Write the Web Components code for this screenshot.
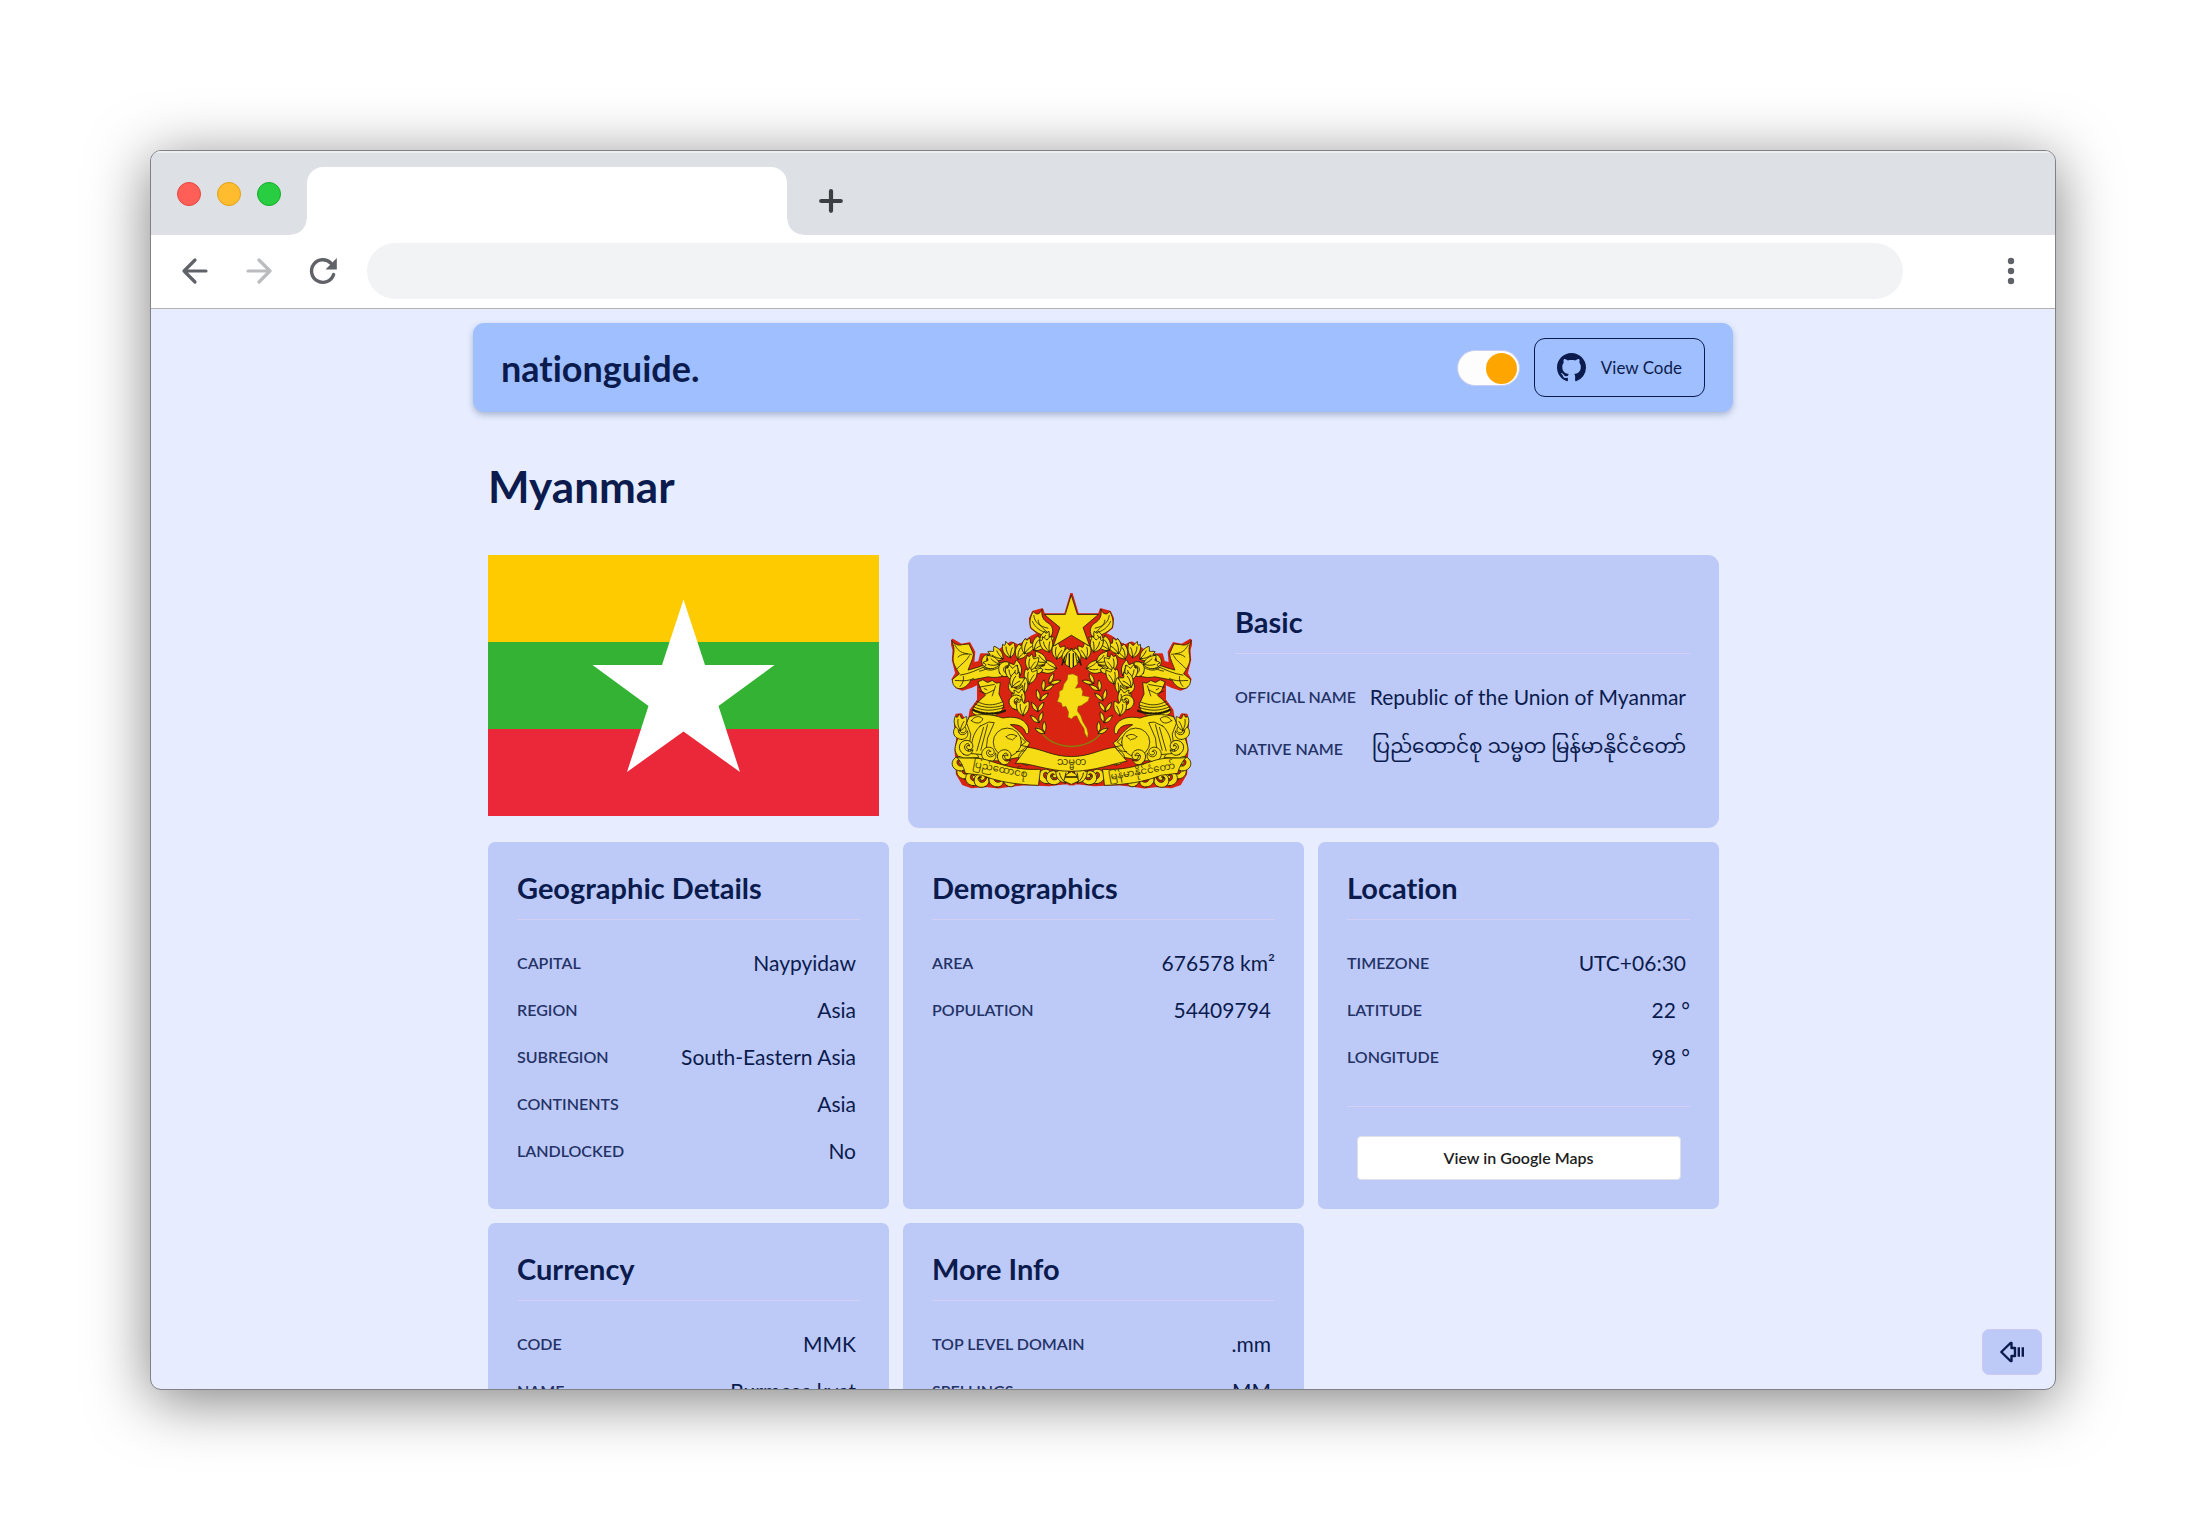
<!DOCTYPE html>
<html lang="en">
<head>
<meta charset="utf-8">
<title>nationguide.</title>
<style>
  :root {
    --ink: #0b1b4d;
    --label: #243266;
    --page: #e7edff;
    --card: #bdcaf8;
    --bar: #a0bfff;
    --rule: #d2d0f5;
  }
  body {
    margin: 0;
    padding: 150px;
    height: 100vh;
    box-sizing: border-box;
    overflow: hidden;
    background: #fff;
    color: var(--ink);
    font-family: Lato, "Noto Sans", "Noto Sans Myanmar", sans-serif;
    font-variant-ligatures: none;
  }
</style>
</head>
<body>

<browser-window>
  <country-page></country-page>
</browser-window>

<template id="browser-window">
  <style>
    :host {
      display: flex; flex-direction: column; height: 100%; box-sizing: border-box; position: relative;
      border: 1px solid #808184; border-radius: 11px; overflow: hidden; background: var(--page);
      box-shadow: 0 10px 60px rgba(0,0,0,.5);
    }
    button { border: 0; padding: 0; background: none; display: block; }
    svg { display: block; }
    .tabs { flex: none; height: 84px; background: #dde0e5; display: flex; align-items: flex-end; box-shadow: inset 0 2px #eceef0; }
    .lights { display: flex; gap: 16px; padding: 2px 10px 0 26px; align-self: center; }
    .lights button { width: 24px; height: 24px; border-radius: 50%; box-sizing: border-box; border: 1px solid var(--edge); }
    .red { background: #ff5f57; --edge: #e2463f; }
    .yellow { background: #febc2e; --edge: #e1a116; }
    .green { background: #28cd41; --edge: #14ae2b; }
    .flare { width: 16px; height: 16px; }
    .flare.l { background: radial-gradient(circle at 0 0, #dde0e5 15px, #fff 16px); }
    .flare.r { background: radial-gradient(circle at 100% 0, #dde0e5 15px, #fff 16px); }
    .tab { width: 480px; height: 68px; background: #fff; border-radius: 16px 16px 0 0; }
    .plus { margin: 0 0 21px 15px; }
    .tools { flex: none; height: 71px; padding: 0 0 2px 28px; background: #fff; border-bottom: 1px solid #b4b0b5; display: flex; align-items: center; }
    .tools button { margin-right: 32px; }
    .tools input { flex: 1; min-width: 0; height: 56px; border: 0; border-radius: 28px; background: #f1f3f5; padding: 0 28px; box-sizing: border-box; font: 20px Lato, sans-serif; margin-left: -4px; }
    .tools .more { margin: 0 28px 0 92px; }
    .view { flex: 1; min-height: 0; overflow: hidden; }
  </style>
  <div class="tabs">
    <div class="lights">
      <button class="red" aria-label="Close"></button>
      <button class="yellow" aria-label="Minimize"></button>
      <button class="green" aria-label="Maximize"></button>
    </div>
    <div class="flare l"></div><div class="tab"></div><div class="flare r"></div>
    <button class="plus" aria-label="New tab"><svg width="26" height="26" viewBox="0 0 26 26" stroke="#3c4043" stroke-width="4.200" stroke-linecap="round"><path d="M13 3.200v19.600M3.200 13h19.600"/></svg></button>
  </div>
  <div class="tools">
    <button aria-label="Back"><svg width="32" height="32" viewBox="0 0 32 32" fill="none" stroke="#5f6368" stroke-width="3.200" stroke-linecap="round" stroke-linejoin="round"><path d="M27 16H5M16 5 5 16l11 11"/></svg></button>
    <button aria-label="Forward"><svg width="32" height="32" viewBox="0 0 32 32" fill="none" stroke="#babcbe" stroke-width="3.200" stroke-linecap="round" stroke-linejoin="round"><path d="M5 16h22M16 5l11 11-11 11"/></svg></button>
    <button aria-label="Reload"><svg width="32" height="32" viewBox="0 0 32 32"><path d="M26.600 19.500A11.300 11.300 0 1 1 24 8.200" fill="none" stroke="#5f6368" stroke-width="3.400" stroke-linecap="round"/><path d="M29.800 3v11.400H18.500z" fill="#5f6368"/></svg></button>
    <input type="text" aria-label="Address">
    <button class="more" aria-label="Menu"><svg width="32" height="32" viewBox="0 0 32 32" fill="#5f6368"><circle cx="16" cy="6" r="3.200"/><circle cx="16" cy="16" r="3.200"/><circle cx="16" cy="26" r="3.200"/></svg></button>
  </div>
  <div class="view"><slot></slot></div>
</template>

<template id="country-page">
  <style>
    :host { display: block; }
    .wrap { max-width: 1260px; margin: 0 auto; padding-top: 14px; }
    main { padding: 0 14px 0 15px; }
    h1 { margin: 0; padding: 47px 0 42px; font-size: 44px; line-height: 54px; font-weight: 700; }
    .top { display: flex; align-items: flex-start; gap: 29px; }
    .top info-card { flex: 1; }
    .cards { display: grid; grid-template-columns: repeat(3, 1fr); gap: 14px; margin-top: 14px; }
    .maps { display: block; box-sizing: border-box; width: 324px; max-width: 100%; height: 44px; margin: 29px auto 0; border: 1px solid #dfe1ea; border-radius: 4px; background: #fff; color: #1c1d22; font: 600 16px/42px Lato, sans-serif; text-align: center; text-decoration: none; }
    hr { border: 0; border-top: 1px solid var(--rule); margin: 26px 0 0; }
    .back { position: absolute; right: 13px; bottom: 14px; width: 60px; height: 46px; box-sizing: border-box; padding: 0; border: 1px solid #cbc9f3; border-radius: 7px; background: var(--card); display: grid; place-items: center; }
  </style>
  <div class="wrap">
    <site-header></site-header>
    <main>
      <h1>Myanmar</h1>
      <div class="top">
        <country-flag></country-flag>
        <info-card heading="Basic" wide>
          <state-seal slot="media"></state-seal>
          <info-row label="Official Name">Republic of the Union of Myanmar</info-row>
          <info-row label="Native Name" native>ပြည်ထောင်စု သမ္မတ မြန်မာနိုင်ငံတော်</info-row>
        </info-card>
      </div>
      <div class="cards">
        <info-card heading="Geographic Details">
          <info-row label="Capital">Naypyidaw</info-row>
          <info-row label="Region">Asia</info-row>
          <info-row label="Subregion">South-Eastern Asia</info-row>
          <info-row label="Continents">Asia</info-row>
          <info-row label="Landlocked">No</info-row>
        </info-card>
        <info-card heading="Demographics">
          <info-row label="Area" unit>676578 km²</info-row>
          <info-row label="Population">54409794</info-row>
        </info-card>
        <info-card heading="Location">
          <info-row label="Timezone">UTC+06:30</info-row>
          <info-row label="Latitude" unit>22 °</info-row>
          <info-row label="Longitude" unit>98 °</info-row>
          <hr>
          <a class="maps" href="#maps">View in Google Maps</a>
        </info-card>
        <info-card heading="Currency">
          <info-row label="Code">MMK</info-row>
          <info-row label="Name">Burmese kyat</info-row>
        </info-card>
        <info-card heading="More Info">
          <info-row label="Top Level Domain">.mm</info-row>
          <info-row label="Spellings">MM</info-row>
        </info-card>
      </div>
    </main>
  </div>
  <button class="back" aria-label="Go back"><svg width="26" height="22" viewBox="0 0 26 22" fill="none" stroke="#0b1b4d" stroke-width="2.400" stroke-linejoin="round"><path d="M11.500 2 2.300 11l9.200 9h1v-5H16V7h-3.500V2z"/><path d="M19.800 6.200v9.600M23.800 6.200v9.600"/></svg></button>
</template>

<template id="site-header">
  <style>
    :host { display: block; }
    header { display: flex; align-items: center; gap: 14px; box-sizing: border-box; min-height: 89px; padding: 0 28px; background: var(--bar); border-radius: 11px; box-shadow: 0 3px 6px rgba(60,80,130,.35); }
    .brand { margin-right: auto; color: inherit; text-decoration: none; font-weight: 700; font-size: 36px; line-height: 44px; }
    label { position: relative; display: flex; }
    input { appearance: none; margin: 0; width: 63px; height: 36px; box-sizing: border-box; border: 1px solid #c9cdee; border-radius: 18px; background: #fdfdfd; display: flex; justify-content: flex-end; padding: 2px; }
    input::before { content: ""; width: 31px; height: 31px; border-radius: 50%; background: #ffa500; }
    .code { display: flex; align-items: center; gap: 15px; box-sizing: border-box; height: 59px; padding: 0 22px; border: 1px solid var(--ink); border-radius: 11px; color: inherit; text-decoration: none; font-size: 17px; line-height: 28px; }
    svg { display: block; }
  </style>
  <header>
    <a class="brand" href="#home">nationguide.</a>
    <label><input type="checkbox" role="switch" checked aria-label="Light theme"></label>
    <a class="code" href="#code"><svg width="29" height="29" viewBox="0 0 16 16" fill="#0b1b4d"><path d="M8 0C3.580 0 0 3.580 0 8c0 3.540 2.290 6.530 5.470 7.590.4.070.55-.17.55-.38 0-.19-.01-.82-.01-1.490-2.010.37-2.530-.49-2.690-.94-.09-.23-.48-.94-.82-1.130-.28-.15-.68-.52-.01-.53.63-.01 1.080.58 1.230.82.72 1.210 1.870.87 2.330.66.07-.52.28-.87.51-1.070-1.780-.2-3.640-.89-3.640-3.950 0-.87.31-1.590.82-2.150-.08-.2-.36-1.020.08-2.120 0 0 .67-.21 2.200.82.64-.18 1.320-.27 2-.27s1.360.09 2 .27c1.530-1.040 2.200-.82 2.200-.82.44 1.100.16 1.920.08 2.120.51.56.82 1.270.82 2.150 0 3.070-1.870 3.750-3.650 3.950.29.25.54.73.54 1.480 0 1.070-.01 1.930-.01 2.200 0 .21.15.46.55.38A8.010 8.010 0 0 0 16 8c0-4.420-3.580-8-8-8z"/></svg>View Code</a>
  </header>
</template>

<template id="info-card">
  <style>
    :host { display: block; box-sizing: border-box; padding: 29px; border-radius: 7px; background: var(--card); }
    :host([wide]) { display: flex; align-items: center; gap: 43px; min-height: 273px; padding: 0 29px 0 43px; border-radius: 11px; }
    .body { flex: 1; min-width: 0; }
    h2 { margin: 0 0 19px; padding-bottom: 14px; border-bottom: 1px solid var(--rule); font-size: 29px; line-height: 34px; font-weight: 700; }
  </style>
  <slot name="media"></slot>
  <div class="body"><h2></h2><slot></slot></div>
</template>

<template id="info-row">
  <style>
    :host { display: flex; align-items: center; justify-content: space-between; height: 47px; white-space: nowrap; }
    :host([native]) { height: 58px; }
    .label { font-size: 16px; line-height: 24px; font-weight: 600; text-transform: uppercase; color: var(--label); }
    .value { font-size: 21px; line-height: 32px; padding-right: 4px; }
    :host([unit]) .value { padding-right: 0; }
    :host([native]) .value { font-size: 20px; padding-bottom: 8px; }
  </style>
  <span class="label"></span><span class="value"><slot></slot></span>
</template>

<template id="country-flag">
  <style>:host { display: block; width: 391px; } svg { display: block; width: 100%; }</style>
  <svg viewBox="0 0 391 261" role="img" aria-label="Flag of Myanmar">
    <path fill="#fecb00" d="M0 0h391v87H0z"/><path fill="#34b233" d="M0 87h391v87H0z"/><path fill="#ea2839" d="M0 174h391v87H0z"/>
    <path fill="#fff" d="M195.500 44.500 217 110h69.500l-56 41 21.500 66-56.500-40.500L139 217l21.500-66-56-41H174z"/>
  </svg>
</template>

<template id="state-seal">
  <style>:host { display: block; flex: none; width: 241px; } svg { display: block; width: 100%; }</style>
  <svg viewBox="185 159 719 589" role="img" aria-label="State Seal of Myanmar">
    <defs>
      <g id="leaf"><path d="M0 0C-16-8-22-26-14-44c4 6 8 6 10-6 8 6 6 12 10 14 6-2 8-6 14-6 2 18-2 34-20 42z"/><path d="M0-2C-6-14-8-22-6-34M1-3C4-14 6-20 12-28" fill="none"/></g>
      <g id="sprig"><path d="M0 0C-9-8-9-20-3-32 4-22 6-10 0 0z"/></g>
      <g id="curl"><path d="M0 0c-22-2-30-22-18-36 10-12 30-8 32 6 0 10-12 14-17 6-1-5 3-8 7-6-4-8-14-4-13 5 1 14 22 15 27-1 4 14-2 26-18 26z"/></g>
      <g id="half">
        <path fill="#f5dc14" d="M457 208c-4 18 2 32 20 42 14 10 14 28 6 38-22 2-44-10-60-26-6-18 0-36 8-48 6 10 18 12 26-6z"/>
        <path fill="none" d="M432 226c2 20 16 32 42 38M445 240c0 14 14 24 34 42M428 244c8 18 22 28 46 36"/>
        <path fill="#f5dc14" d="M187 301c8 12 20 16 32 12l20-2 13 30c-2 18-12 34-16 48 20-6 40-10 54-20l60-4 4 36c-18 10-40 12-58 8l-52 10c-6 14-22 28-38 25-14-5-18-18-16-28l20-16c-12-20-22-34-18-54 4-18 2-30-5-45z"/>
        <path fill="none" d="M196 314c8 12 14 24 38 26M206 350c10-10 26-10 40-8M202 386c14-16 30-24 38-40M212 404c30-4 50-16 76-26M198 420c16 0 36 4 54-6M222 408c2 10-2 22-10 30M280 380c10 12 30 12 46 2M270 392c16-2 28-10 40-26"/>
        <g fill="#f5dc14">
          <use href="#curl" transform="translate(300 385)"/><use href="#curl" transform="translate(330 398) rotate(60)"/>
          <use href="#leaf" transform="translate(340 356) rotate(-60)"/><use href="#leaf" transform="translate(362 352) rotate(-12)"/>
          <use href="#leaf" transform="translate(384 356) rotate(24)"/><use href="#leaf" transform="translate(330 372) rotate(-80)"/>
          <use href="#leaf" transform="translate(404 340) rotate(22)"/><use href="#leaf" transform="translate(432 330) rotate(35)"/>
          <use href="#leaf" transform="translate(455 318) rotate(30)"/><use href="#leaf" transform="translate(478 335) rotate(-20)"/>
          <use href="#leaf" transform="translate(500 356) rotate(8)"/><use href="#leaf" transform="translate(520 366) rotate(36)"/>
          <use href="#curl" transform="translate(470 392) rotate(-30)"/><use href="#curl" transform="translate(440 400)"/>
          <use href="#leaf" transform="translate(500 384) rotate(-84)"/><use href="#leaf" transform="translate(470 366) rotate(-70)"/>
          <use href="#leaf" transform="translate(420 390) rotate(10)"/><use href="#leaf" transform="translate(392 404) rotate(-40)"/>
          <use href="#leaf" transform="translate(372 420) rotate(-14)"/><use href="#leaf" transform="translate(418 430) rotate(6)"/>
          <use href="#leaf" transform="translate(404 458) rotate(-20)"/><use href="#curl" transform="translate(380 460)"/>
          <use href="#leaf" transform="translate(398 492) rotate(-26)"/><use href="#curl" transform="translate(374 506) rotate(20)"/>
          <use href="#leaf" transform="translate(400 525) rotate(-4)"/><use href="#leaf" transform="translate(366 440) rotate(30)"/>
          <path d="M266 424l14-6 14 8 14-6 12 8 12-2-4 34 14 30c0 26-22 38-50 38-22 2-40-6-44-14 2-16 14-24 26-38l14-12-12-14z"/>
          <path d="M240 528c30-10 66-8 100 4 30-6 60-2 74 24 6 16 2 26-6 22-4-22-26-28-46-26 16 10 34 24 46 46l12 8-24 42-66 12-90-4-26-8c4-40 8-90 26-120z"/>
          <path d="M212 526c-14 10-18 20-14 34l12 16-12 40c-4 18 6 32 20 36l50-2c-4-14-20-18-32-14l8-56-16-42c-8 4-14-2-16-12z"/>
        </g>
        <path d="M268 440l46-8M270 452l20 8 24-12M284 444l8 4M318 436l-10 30M262 482c24 14 50 14 76 2M252 498c26 14 60 14 92 2M256 490c24 12 56 14 84 4" fill="none"/>
        <path d="M252 508c26 14 66 14 94 2" fill="none" stroke-width="7" stroke-dasharray="3 5"/>
        <g fill="#f5dc14"><path d="M272 556l26-12 16 2-20 46-6 50-44-4c2-30 4-60 28-82z"/><path d="M282 560l-20 70M294 552l-20 76M246 540c8-14 24-16 34-6-4 14-18 18-34 6z" fill="none"/><circle cx="353" cy="604" r="42"/><path d="M350 588c10-12 24-6 32-2-6 2-8 8-14 12-6-6-12 0-18-10zM394 590l14 14-14 10 22 4M380 632c14 2 22-6 28-14" fill="none"/>
          <use href="#curl" transform="translate(216 596)"/><use href="#curl" transform="translate(222 640) rotate(30)"/><use href="#leaf" transform="translate(212 570)"/>
          <use href="#curl" transform="translate(300 662)"/><use href="#curl" transform="translate(332 666) rotate(40)"/><use href="#curl" transform="translate(410 672)"/>
          <use href="#curl" transform="translate(226 714)"/><use href="#curl" transform="translate(252 734)"/><use href="#curl" transform="translate(288 736) rotate(-30)"/><use href="#curl" transform="translate(322 738)"/><use href="#curl" transform="translate(352 734) rotate(30)"/><use href="#curl" transform="translate(212 690)"/>
          <use href="#curl" transform="translate(470 728)"/><use href="#curl" transform="translate(500 730) rotate(-20)"/><use href="#leaf" transform="translate(526 726) rotate(-20)"/>
          <path d="M203 650c36 4 60-2 92 8 60 20 100 30 157 27l-6 48c-60-2-120-10-168-30l-50-6c-6-20-12-34-25-47z"/>
        </g>
        <path d="M544 617c-40-2-78-16-100-58" fill="none" stroke="#8a7a10" stroke-width="4"/>
        <g fill="#f5dc14">
          <use href="#sprig" transform="translate(478 428) rotate(30)"/><use href="#sprig" transform="translate(482 430) rotate(78)"/>
          <use href="#sprig" transform="translate(460 450) rotate(10)"/><use href="#sprig" transform="translate(464 450) rotate(64)"/>
          <use href="#sprig" transform="translate(449 478) rotate(-8)"/><use href="#sprig" transform="translate(452 480) rotate(52)"/>
          <use href="#sprig" transform="translate(443 512) rotate(-28)"/><use href="#sprig" transform="translate(445 512) rotate(38)"/>
          <use href="#sprig" transform="translate(446 546) rotate(-42)"/><use href="#sprig" transform="translate(449 544) rotate(22)"/>
          <use href="#sprig" transform="translate(464 578) rotate(-56)"/><use href="#sprig" transform="translate(464 574) rotate(4)"/>
        </g>
      </g>
      <path id="edge" d="M544 162l-18 61-64-1-5-14-27 7-9 21 3 26 22 18-21 10-28 20-12 6-20-9-20 12-25 17-14 7-31-1-6 23-18 4 3-34-14-26-24 5-26-15-2 12 5 18-2 30 10 40-11 18 10 22 18 8 26-8 22-10v50l-22 30-5 30-10 8-14-26-14 2-3 36 8 20-7 50 2 25 2 45 18 30 26 9 40-4 40 5 30-5 50-5 70 3 50-6 24 4z"/>
    </defs>
    <g fill="#d92411" stroke="#d92411" stroke-width="7" stroke-linejoin="round"><use href="#edge"/><use href="#edge" transform="translate(1089 0) scale(-1 1)"/></g>
    <g stroke="#221b05" stroke-width="2.400" stroke-linejoin="round" stroke-linecap="round"><use href="#half"/><use href="#half" transform="translate(1089 0) scale(-1 1)"/>
      <path fill="#f5dc14" d="M544 166l18 57h63l-46 39 20 56-55-33-54 33 20-56-47-39h62z"/>
      <path fill="#f5dc14" d="M532 338l12-10 12 10 6 34-18 12-18-12zM530 700l14-8 14 8 8 20-22 10-22-10z"/>
      <path d="M538 340v38M550 340v38M524 350l-8 24M565 350l8 24M528 708h32" fill="none" stroke-width="4"/>
      <path fill="#f5dc14" stroke="#806f08" stroke-width="1.500" d="M549 401l14 6 1 22-8 14 16-2 6 12-2 12 22 4-4 12-20 14-10 2-2 14 10 14 6 18 12 20 4 16-2 12-8-14-2-14-12-18-10-20-8 2-8 8-10-6 2-14-8-18-10 2-4-12-12-4 6-16v-14l10-6 4-16 10-14 2-14z"/>
      <path fill="#f5dc14" d="M414 619c44 6 76 28 130 28s86-22 130-28l36 42c-40 6-96 30-166 30s-130-28-166-24z"/>
    </g>
    <g fill="#4a3f08" font-family="'Noto Sans Myanmar', 'Noto Sans', sans-serif" text-anchor="middle">
      <text x="545" y="672" font-size="30">သမ္မတ</text>
      <text x="332" y="694" font-size="30" transform="rotate(11 332 684)">ပြည်ထောင်စု</text>
      <text x="754" y="700" font-size="30" transform="rotate(-10 754 690)">မြန်မာနိုင်ငံတော်</text>
    </g>
  </svg>
</template>

<script>
  const stamp = (host) => {
    const root = host.attachShadow({ mode: "open" });
    root.append(document.getElementById(host.localName).content.cloneNode(true));
    return root;
  };

  class ShadowElement extends HTMLElement {
    constructor() { super(); stamp(this); }
  }
  class InfoCard extends ShadowElement {
    connectedCallback() { this.shadowRoot.querySelector("h2").textContent = this.getAttribute("heading"); }
  }
  class InfoRow extends ShadowElement {
    connectedCallback() { this.shadowRoot.querySelector(".label").textContent = this.getAttribute("label"); }
  }

  customElements.define("info-row", InfoRow);
  customElements.define("info-card", InfoCard);
  customElements.define("country-flag", class extends ShadowElement {});
  customElements.define("state-seal", class extends ShadowElement {});
  customElements.define("site-header", class extends ShadowElement {});
  customElements.define("country-page", class extends ShadowElement {});
  customElements.define("browser-window", class extends ShadowElement {});
</script>
</body>
</html>
